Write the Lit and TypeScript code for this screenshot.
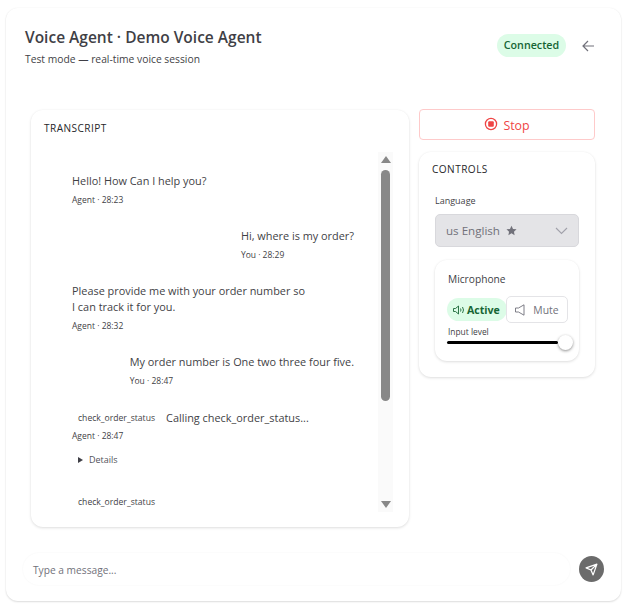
import { LitElement, html, css } from "lit";
import { customElement } from "lit/decorators.js";

@customElement("app-root")
export class AppRoot extends LitElement {
  static styles = css`
    :host { display: block; width: 630px; height: 607px; background: #fff; font-family: "Open Sans", "Noto Sans", sans-serif; color: #3f3f46; overflow: hidden; box-sizing: border-box; padding: 8px 9px 6px 6px; }
    * { box-sizing: border-box; }
    .page { height: 593px; border-radius: 12px; background: #fff; box-shadow: 0 1px 2px rgba(0,0,0,.13), 0 0 2px rgba(0,0,0,.05); padding: 18px 17px 0 19px; display: flex; flex-direction: column; }
    .head { display: flex; justify-content: space-between; height: 84px; padding-right: 9px; }
    h1 { margin: 0; font-size: 15.5px; line-height: 22px; font-weight: 600; color: #3f3f46; }
    .sub { font-size: 10.3px; line-height: 14px; margin-top: 4px; color: #3f3f46; }
    .head-right { display: flex; align-items: flex-start; gap: 15px; padding-top: 8px; }
    .badge { background: #dcfce7; color: #166534; font-size: 10.7px; font-weight: 600; height: 23px; line-height: 23px; border-radius: 12px; width: 69px; text-align: center; white-space: nowrap; }
    .back { width: 14px; height: 14px; margin-top: 5px; display: block; }
    .main { display: flex; gap: 10px; padding-left: 6px; height: 417px; }
    .card { background: #fff; border-radius: 12px; box-shadow: 0 1px 3px rgba(0,0,0,.13), 0 0 2px rgba(0,0,0,.03); }
    .transcript { width: 378px; height: 417px; padding: 11px 16px 15px 13px; display: flex; flex-direction: column; }
    .label { font-size: 10.1px; line-height: 14px; letter-spacing: .45px; color: #27272a; }
    .body { display: flex; margin-top: 17px; height: 360px; }
    .msgs { flex: 1; overflow: hidden; padding: 21px 24px 0 28px; display: flex; flex-direction: column; }
    .msg { font-size: 10.9px; line-height: 16px; color: #3f3f46; margin-bottom: 22px; }
    .msg.me { align-self: flex-end; }
    .msg.me.last { margin-bottom: 23px; }
    .msg.tail { margin-bottom: 0; }
    .msg p { margin: 0; white-space: nowrap; }
    .meta { font-size: 8.5px; line-height: 12px; margin-top: 5px; color: #3f3f46; }
    .tail .meta { margin-top: 4px; }
    .tool { display: flex; align-items: center; gap: 11px; padding-left: 6px; }
    .chip { font-size: 8.6px; line-height: 16px; color: #3f3f46; }
    .chip.end { padding-left: 6px; }
    .details { font-size: 9px; line-height: 12px; display: flex; align-items: center; gap: 6px; padding-left: 6px; margin-top: 12px; margin-bottom: 28px; color: #52525b; }
    .tri { width: 0; height: 0; border-left: 5px solid #3f3f46; border-top: 3px solid transparent; border-bottom: 3px solid transparent; }
    .scroll { width: 15px; background: #fafafa; display: flex; flex-direction: column; align-items: center; padding-top: 4px; }
    .up { width: 0; height: 0; border-left: 5px solid transparent; border-right: 5px solid transparent; border-bottom: 7px solid #888; }
    .thumb { width: 9px; height: 231px; background: #888; border-radius: 5px; margin-top: 7px; }
    .down { width: 0; height: 0; border-left: 5px solid transparent; border-right: 5px solid transparent; border-top: 7px solid #888; margin-top: 100px; }
    .side { width: 176px; display: flex; flex-direction: column; gap: 12px; margin-top: -1px; }
    .stop { height: 31px; width: 176px; border: 1px solid #fecaca; border-radius: 4px; background: #fff; color: #ef4444; font: 12.4px "Open Sans", sans-serif; display: flex; align-items: center; justify-content: center; gap: 5px; padding: 2px 0 0; }
    .stop svg { display: block; margin-top: -4px; }
    .controls { height: 225px; padding: 10px 16px 16px 16px; width: 176px; }
    .controls .label { margin-left: -3px; }
    .field { font-size: 9px; line-height: 13px; margin-top: 18px; color: #3f3f46; }
    .select { height: 33px; margin-top: 7px; background: #e4e4e7; border: 1px solid #d8d8dc; border-radius: 5px; display: flex; align-items: center; padding: 0 10px; font-size: 11.6px; color: #71717a; gap: 6px; }
    .select .chev { margin-left: auto; display: block; }
    .mic { margin-top: 13px; height: 101px; padding: 12px 11px 0 13px; width: 144px; }
    .mic-t { font-size: 10.2px; line-height: 14px; color: #3f3f46; }
    .mic-row { display: flex; margin: 10px 0 0 -1px; height: 27px; align-items: center; }
    .active { display: flex; align-items: center; gap: 2px; width: 60px; height: 23px; padding-left: 6px; background: #dcfce7; color: #166534; border-radius: 12px; font-size: 10.6px; font-weight: 700; white-space: nowrap; flex: none; }
    .mute { width: 62px; height: 27px; border: 1px solid #e4e4e7; border-radius: 5px; background: #fff; display: flex; align-items: center; justify-content: center; gap: 8px; color: #71717a; font: 10.4px "Open Sans", sans-serif; padding: 0; flex: none; margin-left: -1px; }
    .input-l { font-size: 8.4px; line-height: 11px; margin-top: 3px; color: #3f3f46; }
    .range { display: flex; align-items: center; height: 10px; position: relative; margin-left: -1px; }
    .track { width: 111px; height: 3px; background: #000; border-radius: 2px; }
    .knob { position: absolute; left: 111px; top: -2px; width: 15px; height: 15px; border-radius: 50%; background: #fff; box-shadow: 0 1px 3px rgba(0,0,0,.45); }
    .foot { display: flex; align-items: center; margin-top: 26px; gap: 9px; margin-left: -2px; }
    .input { flex: none; width: 547px; height: 32px; border-radius: 16px; box-shadow: 0 0 2px rgba(0,0,0,.05); padding: 2px 10px 0 10px; display: flex; align-items: center; font-size: 10.2px; color: #71717a; }
    .send { width: 25px; height: 26px; border-radius: 50%; background: #6b6b6b; border: 0; display: flex; align-items: center; justify-content: center; padding: 0; flex: none; }
  `;

  render() {
    return html`
      <div class="page">
        <div class="head">
          <div>
            <h1>Voice Agent · Demo Voice Agent</h1>
            <div class="sub">Test mode — real-time voice session</div>
          </div>
          <div class="head-right">
            <div class="badge">Connected</div>
            <svg class="back" viewBox="0 0 14 14" fill="none" stroke="#71717a" stroke-width="1.2"><path d="M13 7H2M7 2 2 7l5 5"/></svg>
          </div>
        </div>
        <div class="main">
          <div class="card transcript">
            <div class="label">TRANSCRIPT</div>
            <div class="body">
              <div class="msgs">
                <div class="msg"><p>Hello! How Can I help you?</p><div class="meta">Agent · 28:23</div></div>
                <div class="msg me"><p>Hi, where is my order?</p><div class="meta">You · 28:29</div></div>
                <div class="msg"><p>Please provide me with your order number so<br />I can track it for you.</p><div class="meta">Agent · 28:32</div></div>
                <div class="msg me last"><p>My order number is One two three four five.</p><div class="meta">You · 28:47</div></div>
                <div class="msg tail">
                  <div class="tool"><span class="chip">check_order_status</span><p>Calling check_order_status...</p></div>
                  <div class="meta">Agent · 28:47</div>
                </div>
                <div class="details"><span class="tri"></span>Details</div>
                <div class="chip end">check_order_status</div>
              </div>
              <div class="scroll"><div class="up"></div><div class="thumb"></div><div class="down"></div></div>
            </div>
          </div>
          <div class="side">
            <button class="stop">
              <svg width="14" height="14" viewBox="0 0 14 14"><circle cx="7" cy="7" r="5.6" fill="none" stroke="#ef4444" stroke-width="1.3"/><rect x="4.2" y="4.2" width="5.6" height="5.6" rx="1" fill="#ef4444"/></svg>
              Stop
            </button>
            <div class="card controls">
              <div class="label">CONTROLS</div>
              <div class="field">Language</div>
              <div class="select">
                <span>us English</span>
                <svg width="11" height="11" viewBox="0 0 24 24" fill="#71717a"><path d="m12 1.500 3.300 7 7.700 1-5.600 5.300 1.400 7.700L12 18l-6.800 4.500 1.400-7.700L1 9.500l7.700-1z"/></svg>
                <svg class="chev" width="13" height="8" viewBox="0 0 13 8" fill="none" stroke="#a1a1aa" stroke-width="1.1"><path d="m1 1 5.500 5.500L12 1"/></svg>
              </div>
              <div class="card mic">
                <div class="mic-t">Microphone</div>
                <div class="mic-row">
                  <div class="active">
                    <svg width="12" height="10" viewBox="0 0 12 10" fill="none" stroke="#166534" stroke-width=".9"><path d="M.5 3.500h2L5.500 1v8L2.500 6.500h-2zM7.500 3.500q1 1.500 0 3M9.500 2q2 3 0 6"/></svg>
                    Active
                  </div>
                  <button class="mute">
                    <svg width="10" height="12" viewBox="0 0 10 12" fill="none" stroke="#71717a" stroke-width=".9"><path d="M.5 4h3L9 .8v10.400L3.500 8h-3z"/></svg>
                    Mute
                  </button>
                </div>
                <div class="input-l">Input level</div>
                <div class="range"><div class="track"></div><div class="knob"></div></div>
              </div>
            </div>
          </div>
        </div>
        <div class="foot">
          <div class="input">Type a message...</div>
          <button class="send" aria-label="Send">
            <svg width="13" height="13" viewBox="0 0 24 24" fill="none" stroke="#fff" stroke-width="2.300" stroke-linejoin="round"><path d="M22 2 15 22l-4-9-9-4zM22 2 11 13"/></svg>
          </button>
        </div>
      </div>
    `;
  }
}
